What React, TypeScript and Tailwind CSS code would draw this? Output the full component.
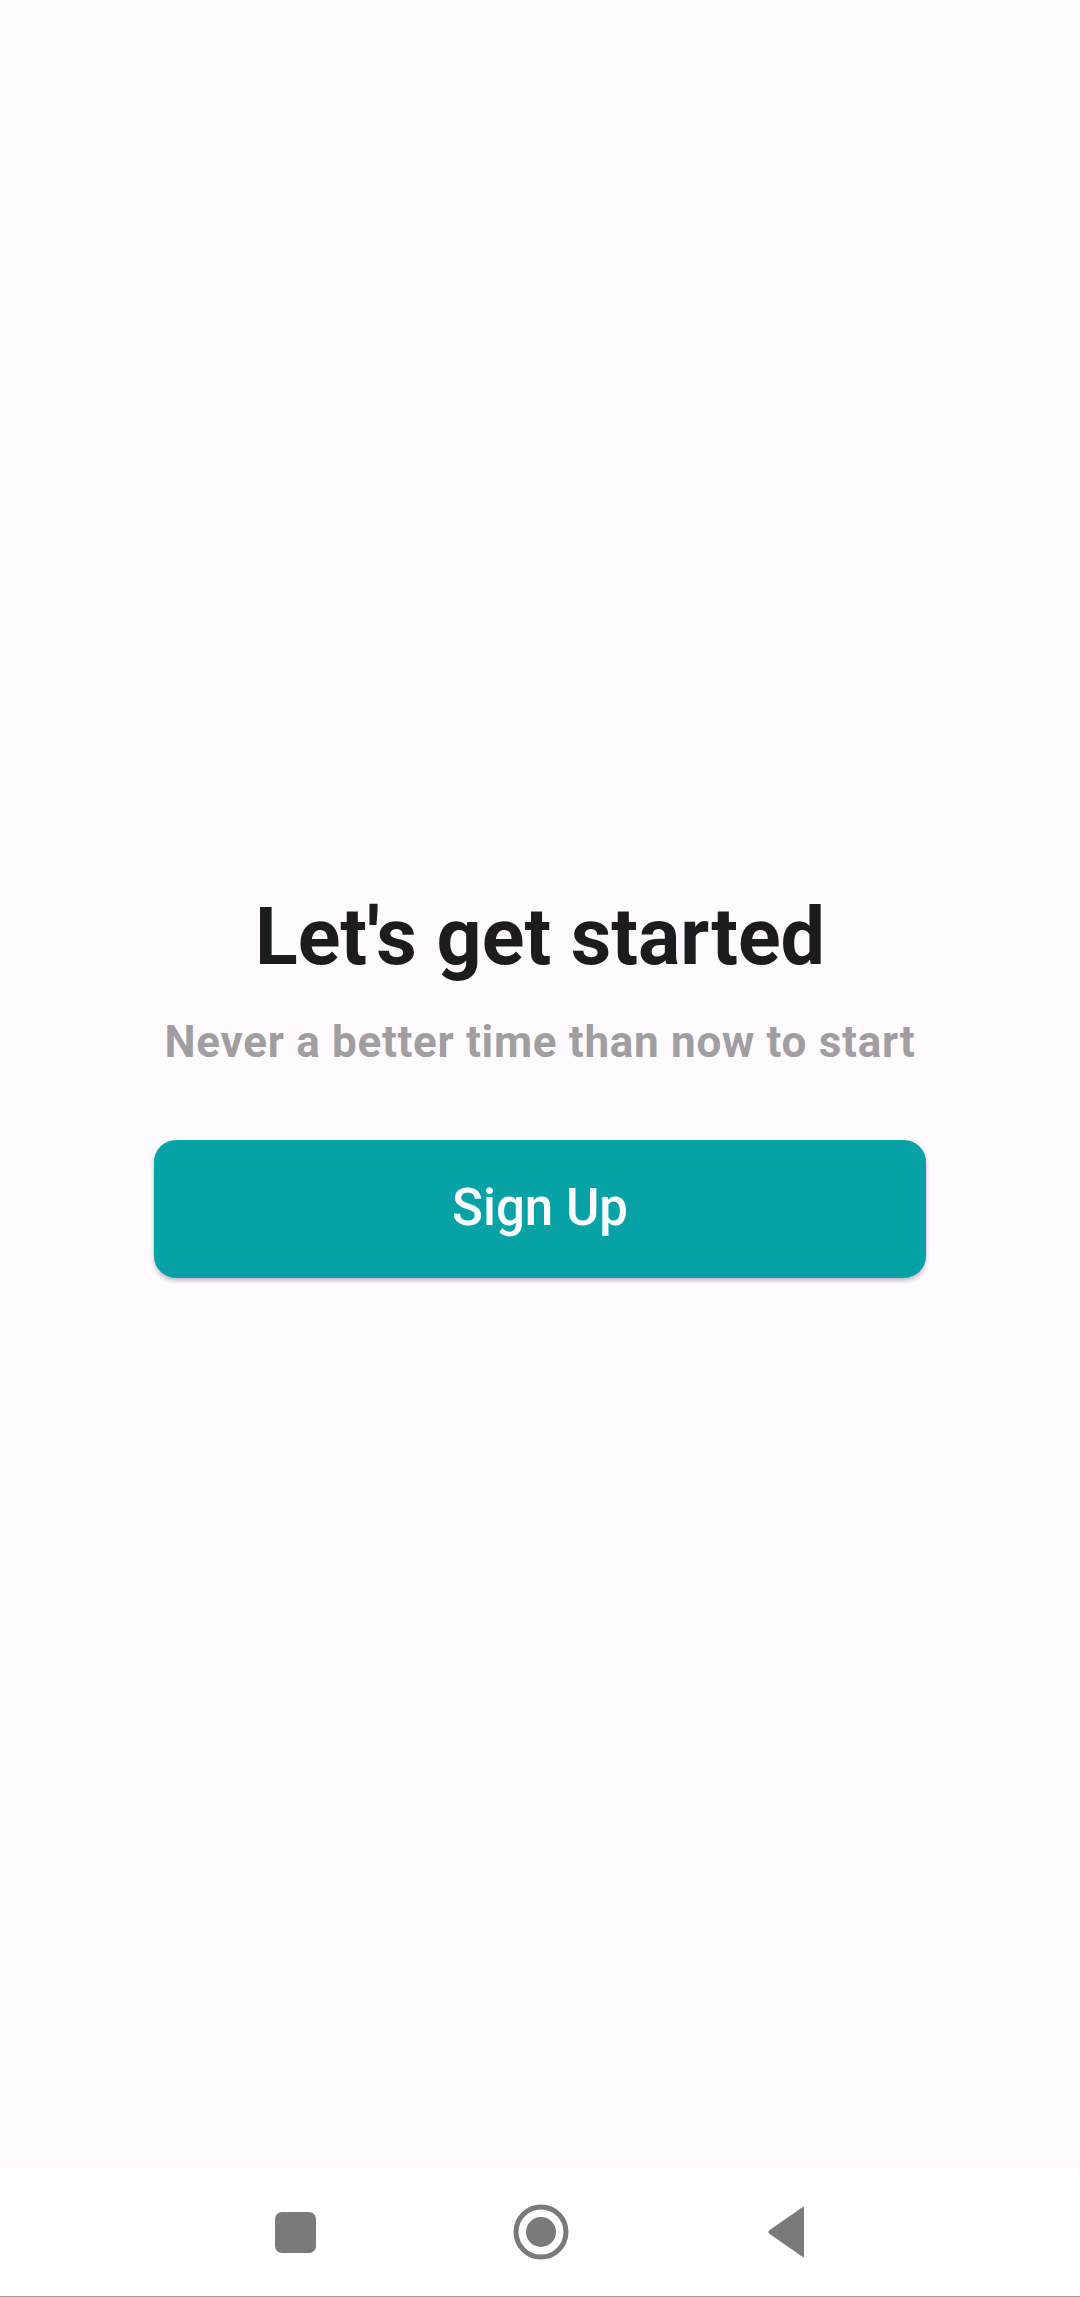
export default function App() {
  return (
    <div className="flex h-[2297px] w-[1080px] flex-col bg-[#fffbfe] font-['Roboto',sans-serif]">
      {/* Main content */}
      <main className="flex flex-1 flex-col items-center justify-center">
        <h1 className="text-[79px] font-bold leading-[93px] text-[#1c1b1f]">Let's get started</h1>
        <p className="mt-[32px] text-[44px] font-bold leading-[52px] tracking-[0.7px] text-[#a09ea1]">
          Never a better time than now to start
        </p>
        <button className="mt-[72px] h-[138px] w-[772px] rounded-[22px] bg-[#07a2a6] text-[51px] font-medium text-white shadow-[0_3px_4px_rgba(0,0,0,0.25)]">
          Sign Up
        </button>
      </main>

      {/* System navigation bar */}
      <nav className="flex h-[129px] items-center justify-center gap-[197px] border-b border-[#9e9e9e] bg-white">
        <div className="h-[41px] w-[41px] rounded-[7px] bg-[#7a7a7a]" />
        <svg width="56" height="56" viewBox="0 0 56 56">
          <circle cx="28" cy="28" r="25" fill="none" stroke="#7a7a7a" strokeWidth="5" />
          <circle cx="28" cy="28" r="15" fill="#7a7a7a" />
        </svg>
        <svg width="40" height="52" viewBox="0 0 40 52">
          <path d="M38 2 L38 50 Q38 52 36 50.5 L3 27.5 Q1.5 26 3 24.5 L36 1.5 Q38 0 38 2 Z" fill="#7a7a7a" />
        </svg>
      </nav>
    </div>
  )
}
